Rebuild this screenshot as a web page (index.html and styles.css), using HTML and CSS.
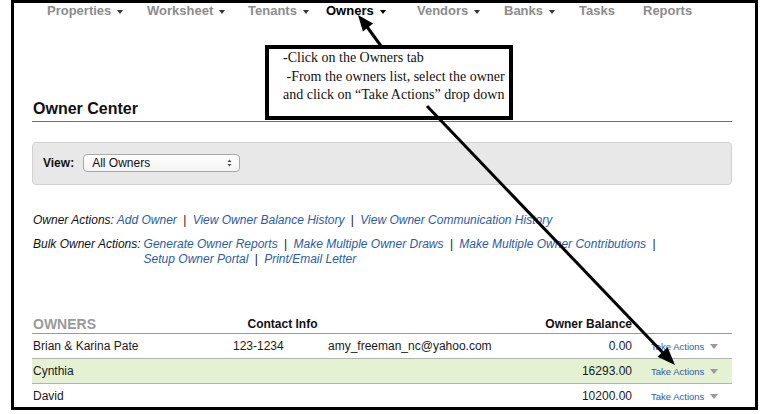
FILE: index.html
```html
<!DOCTYPE html>
<html>
<head>
<meta charset="utf-8">
<title>Owner Center</title>
<link rel="stylesheet" href="styles.css">
</head>
<body>
<div class="frame">
  <nav class="nav">
    <span class="nav-item w-properties">Properties<i class="caret"></i></span>
    <span class="nav-item w-worksheet">Worksheet<i class="caret"></i></span>
    <span class="nav-item w-tenants">Tenants<i class="caret"></i></span>
    <span class="nav-item w-owners active">Owners<i class="caret"></i></span>
    <span class="nav-item w-vendors">Vendors<i class="caret"></i></span>
    <span class="nav-item w-banks">Banks<i class="caret"></i></span>
    <span class="nav-item w-tasks">Tasks</span>
    <span class="nav-item">Reports</span>
  </nav>

  <h1 class="title">Owner Center</h1>

  <div class="view-panel">
    <span class="view-label">View:</span>
    <div class="select">
      <span>All Owners</span>
      <svg class="select-icon" width="5" height="8" viewBox="0 0 5 8"><path d="M2.5 0.5 L4.6 3 L0.4 3 Z M2.5 7.5 L4.6 5 L0.4 5 Z" fill="#555"/></svg>
    </div>
  </div>

  <div class="actions">
    <span class="label">Owner Actions:</span> <a class="link">Add Owner</a> <span class="sep">|</span> <a class="link">View Owner Balance History</a> <span class="sep">|</span> <a class="link">View Owner Communication History</a>
  </div>

  <div class="bulk">
    <span class="label">Bulk Owner Actions:</span>
    <div class="bulk-links">
      <a class="link">Generate Owner Reports</a> <span class="sep">|</span> <a class="link">Make Multiple Owner Draws</a> <span class="sep">|</span> <a class="link">Make Multiple Owner Contributions</a> <span class="sep">|</span> <a class="link">Setup Owner Portal</a> <span class="sep">|</span> <a class="link">Print/Email Letter</a>
    </div>
  </div>

  <div class="table">
    <div class="row head">
      <span class="h-owners">OWNERS</span>
      <span class="h-contact">Contact Info</span>
      <span></span>
      <span class="h-balance">Owner Balance</span>
      <span></span>
    </div>
    <div class="row">
      <span class="c-name">Brian &amp; Karina Pate</span>
      <span>123-1234</span>
      <span>amy_freeman_nc@yahoo.com</span>
      <span class="c-balance">0.00</span>
      <span class="c-actions"><a class="take">Take Actions</a><i class="tri"></i></span>
    </div>
    <div class="row hl">
      <span class="c-name">Cynthia</span>
      <span></span>
      <span></span>
      <span class="c-balance">16293.00</span>
      <span class="c-actions"><a class="take">Take Actions</a><i class="tri"></i></span>
    </div>
    <div class="row">
      <span class="c-name">David</span>
      <span></span>
      <span></span>
      <span class="c-balance">10200.00</span>
      <span class="c-actions"><a class="take">Take Actions</a><i class="tri"></i></span>
    </div>
  </div>
</div>

<div class="callout">
  <div>-Click on the Owners tab</div>
  <div>&nbsp;-From the owners list, select the owner</div>
  <div>and click on &ldquo;Take Actions&rdquo; drop down</div>
</div>

<svg class="arrows" width="778" height="414" viewBox="0 0 778 414">
  <line x1="381" y1="46" x2="365" y2="24" stroke="#000" stroke-width="3"/>
  <polygon points="358,15 373.1,23.4 362.9,31.6" fill="#000"/>
  <line x1="427" y1="106" x2="665" y2="355" stroke="#000" stroke-width="3"/>
  <polygon points="675,365 657.5,356.8 667.6,347.2" fill="#000"/>
</svg>
</body>
</html>
```

FILE: styles.css
```css
html, body {
  margin: 0;
  padding: 0;
  background: #fff;
}

body {
  position: relative;
  width: 778px;
  height: 414px;
  overflow: hidden;
  font-family: "Liberation Sans", Arial, sans-serif;
  color: #222;
}

.frame {
  box-sizing: border-box;
  margin-left: 11px;
  width: 747px;
  height: 410px;
  border: 3px solid #000;
  padding: 0 23px 0 18px;
  overflow: hidden;
}

/* nav */
.nav {
  display: flex;
  height: 16px;
  padding-left: 15px;
  font-size: 13px;
  font-weight: 700;
  line-height: 16px;
  color: #8c8c8c;
  white-space: nowrap;
}

.nav-item {
  display: flex;
  align-items: center;
}

.w-properties { width: 100px; }
.w-worksheet { width: 101px; }
.w-tenants { width: 78px; }
.w-owners { width: 91px; }
.w-vendors { width: 87px; }
.w-banks { width: 75px; }
.w-tasks { width: 64px; }

.nav-item.active {
  color: #000;
}

.caret {
  display: inline-block;
  margin-left: 6px;
  margin-top: 2px;
  border-left: 3.5px solid transparent;
  border-right: 3.5px solid transparent;
  border-top: 4px solid #333;
}

.nav-item.active .caret {
  border-top-color: #000;
}

/* title */
.title {
  margin: 80px 0 0;
  padding: 0 0 2px 1px;
  height: 20px;
  font-size: 16px;
  line-height: 20px;
  font-weight: 700;
  color: #111;
  border-bottom: 1px solid #707070;
}

/* view panel */
.view-panel {
  margin-top: 20px;
  display: flex;
  align-items: center;
  gap: 9px;
  padding: 11px 10px 12px;
  background: #e8e8e8;
  border: 1px solid #d2d2d2;
  border-radius: 4px;
}

.view-label {
  font-size: 12px;
  font-weight: 700;
  color: #111;
}

.select {
  box-sizing: border-box;
  width: 157px;
  height: 18px;
  display: flex;
  align-items: center;
  justify-content: space-between;
  padding: 0 7px 0 8px;
  border: 1px solid #a8a8a8;
  border-radius: 4px;
  background: linear-gradient(#ffffff, #f3f3f3);
  font-size: 12px;
  color: #111;
}

.select-icon {
  display: block;
}

/* actions */
.actions {
  margin-top: 28px;
  padding-left: 1px;
  font-size: 12px;
  line-height: 15px;
  font-style: italic;
  white-space: nowrap;
}

.label {
  color: #111;
}

.link {
  color: #2d5c9e;
  white-space: nowrap;
}

.sep {
  font-style: normal;
  color: #222;
  margin: 0 3px;
}

.bulk {
  margin-top: 9px;
  padding-left: 1px;
  display: flex;
  gap: 3px;
  font-size: 12px;
  line-height: 14.5px;
  font-style: italic;
}

.bulk .label {
  white-space: nowrap;
}

.bulk-links {
  flex: 1;
}

/* table */
.table {
  margin-top: 48px;
}

.row {
  display: grid;
  grid-template-columns: 201px 95px 200px 104px 100px;
  align-items: center;
  height: 24px;
  border-bottom: 1px solid #b3b3b3;
  font-size: 12px;
  color: #1a1a1a;
  white-space: nowrap;
}

.row.hl {
  background: #e4f1d3;
}

.row.head {
  height: 18px;
  padding-bottom: 1px;
  align-items: end;
  border-bottom-color: #9a9a9a;
}

.h-owners {
  padding-left: 1px;
  font-size: 14px;
  line-height: 16px;
  font-weight: 700;
  color: #9a9a9a;
}

.h-contact {
  text-align: center;
  padding-left: 4px;
  font-size: 12px;
  line-height: 16px;
  font-weight: 700;
  color: #111;
}

.h-balance {
  text-align: right;
  font-size: 12px;
  line-height: 16px;
  font-weight: 700;
  color: #111;
}

.c-name {
  padding-left: 1px;
}

.c-balance {
  text-align: right;
}

.c-actions {
  display: flex;
  align-items: center;
  padding-left: 19px;
}

.take {
  font-size: 9.5px;
  color: #2d5c9e;
}

.tri {
  display: inline-block;
  margin-left: 6px;
  border-left: 4px solid transparent;
  border-right: 4px solid transparent;
  border-top: 5px solid #9a9a9a;
}

/* annotation overlays */
.callout {
  position: absolute;
  left: 265px;
  top: 45px;
  box-sizing: border-box;
  width: 248px;
  height: 75px;
  border: 4px solid #000;
  background: #fff;
  padding: 0 0 0 14px;
  font-family: "Liberation Serif", "Times New Roman", serif;
  font-size: 14px;
  line-height: 18.5px;
  color: #111;
  white-space: nowrap;
}

.arrows {
  position: absolute;
  left: 0;
  top: 0;
  pointer-events: none;
}
```
